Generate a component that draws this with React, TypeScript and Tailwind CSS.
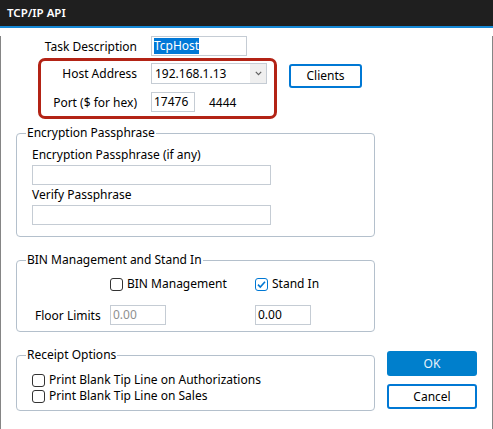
import React from "react";

const input = "h-[20px] border border-[#c5ccd4] bg-white px-[2px] flex items-center text-[12px]";

function Check({ checked, label }: { checked?: boolean; label: string }) {
  return (
    <div className="flex items-center h-[16px]">
      <span
        className={
          checked
            ? "w-[13px] h-[13px] rounded-[3px] border border-[#0078d4] flex items-center justify-center"
            : "w-[13px] h-[13px] rounded-[3px] border border-[#333] bg-white"
        }
      >
        {checked && (
          <svg width="11" height="11" viewBox="0 0 11 11">
            <path d="M2 5.6 L4.3 8 L9 2.8" fill="none" stroke="#0078d4" strokeWidth="1.6" />
          </svg>
        )}
      </span>
      <span className="ml-[4px]">{label}</span>
    </div>
  );
}

export default function App() {
  return (
    <div className="w-[493px] h-[429px] bg-white text-[12px] leading-[16px] text-black font-['Segoe_UI','Noto_Sans',sans-serif]">
      {/* Title bar */}
      <div className="h-[26px] bg-[#1f1f1f] text-white text-[11.5px] font-semibold pl-[7px] flex items-center">TCP/IP API</div>
      <div className="h-[2px] bg-[#1689d6]" />

      <div className="h-[400px] border-x border-b-2 border-[#858585]">
        {/* Task description */}
        <div className="flex items-center mt-[8px]">
          <div className="w-[136px] text-right pt-[1px]">Task Description</div>
          <div className={`${input} ml-[14px] w-[96px]`}>
            <span className="bg-[#0078d7] text-white">TcpHost</span>
          </div>
        </div>

        {/* Host / Port */}
        <div className="flex items-start mt-[2px]">
          <div className="ml-[37px] w-[239px] h-[61px] border-[3px] border-[#b32315] rounded-[7px]">
            <div className="flex items-center mt-[2px]">
              <div className="w-[96px] text-right pt-[1px]">Host Address</div>
              <div className="ml-[14px] w-[116px] h-[21px] border border-[#c5ccd4] flex">
                <div className="flex-1 pl-[3px] flex items-center">192.168.1.13</div>
                <div className="w-[16px] bg-[#efefef] flex items-center justify-center">
                  <svg width="7" height="5" viewBox="0 0 7 5">
                    <path d="M0.8 0.8 L3.5 3.6 L6.2 0.8" fill="none" stroke="#606060" strokeWidth="1.2" />
                  </svg>
                </div>
              </div>
            </div>
            <div className="flex items-center mt-[8px]">
              <div className="w-[96px] text-right pt-[1px]">Port ($ for hex)</div>
              <div className={`${input} ml-[14px] w-[44px]`}>17476</div>
              <div className="ml-[14px] pt-[1px]">4444</div>
            </div>
          </div>
          <button className="ml-[12px] mt-[6px] w-[73px] h-[24px] border-2 border-[#0078d4] rounded-[3px] bg-white">
            Clients
          </button>
        </div>

        <div className="flex">
          <div className="ml-[15px] w-[359px]">
            {/* Encryption */}
            <fieldset className="mt-[6px] border border-[#b4c0cc] rounded-[4px] pb-[11px]">
              <legend className="ml-[9px] px-[1px]">Encryption Passphrase</legend>
              <div className="ml-[15px] mt-[6px]">Encryption Passphrase (if any)</div>
              <div className={`${input} ml-[15px] mt-[2px] w-[239px]`} />
              <div className="ml-[15px] mt-[2px]">Verify Passphrase</div>
              <div className={`${input} ml-[15px] mt-[2px] w-[239px]`} />
            </fieldset>

            {/* BIN management */}
            <fieldset className="mt-[15px] border border-[#b4c0cc] rounded-[4px] pb-[6px]">
              <legend className="ml-[9px] px-[1px]">BIN Management and Stand In</legend>
              <div className="grid grid-cols-[93px_145px_1fr] mt-[8px]">
                <div />
                <Check label="BIN Management" />
                <Check checked label="Stand In" />
              </div>
              <div className="grid grid-cols-[93px_145px_1fr] mt-[13px] items-center">
                <div className="pl-[18px] pt-[2px]">Floor Limits</div>
                <div className={`${input} w-[56px] text-[#8f8f8f]`}>0.00</div>
                <div className={`${input} w-[56px]`}>0.00</div>
              </div>
            </fieldset>

            {/* Receipt options */}
            <fieldset className="mt-[15px] border border-[#b4c0cc] rounded-[4px] pb-[6px]">
              <legend className="ml-[9px] px-[1px]">Receipt Options</legend>
              <div className="ml-[15px] mt-[9px]">
                <Check label="Print Blank Tip Line on Authorizations" />
                <Check label="Print Blank Tip Line on Sales" />
              </div>
            </fieldset>
          </div>

          <div className="ml-[12px] flex flex-col justify-end pb-[2px]">
            <button className="w-[90px] h-[25px] rounded-[3px] bg-[#007fcc] text-[#e8f2fa]">OK</button>
            <button className="mt-[8px] w-[90px] h-[25px] rounded-[3px] border-2 border-[#0078d4] bg-white">
              Cancel
            </button>
          </div>
        </div>
      </div>
    </div>
  );
}
